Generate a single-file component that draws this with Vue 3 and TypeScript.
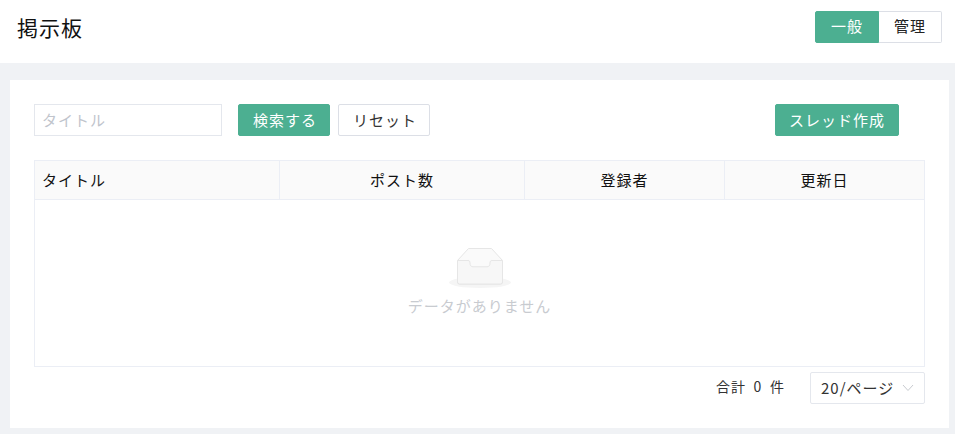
<script setup lang="ts">
const columns: { label: string; cls: string }[] = [
  { label: 'タイトル', cls: 'col-title' },
  { label: 'ポスト数', cls: 'col-posts' },
  { label: '登録者', cls: 'col-user' },
  { label: '更新日', cls: 'col-date' },
]
</script>

<template>
  <div class="page">
    <header class="top">
      <h1 class="title">掲示板</h1>
      <div class="tabs">
        <button class="tab active">一般</button>
        <button class="tab">管理</button>
      </div>
    </header>
    <main class="card">
      <div class="toolbar">
        <input class="search" type="text" placeholder="タイトル" />
        <button class="btn primary search-btn">検索する</button>
        <button class="btn reset">リセット</button>
        <button class="btn primary create">スレッド作成</button>
      </div>
      <div class="table">
        <div class="thead">
          <div v-for="c in columns" :key="c.label" class="th" :class="c.cls">{{ c.label }}</div>
        </div>
        <div class="empty">
          <svg class="empty-icon" width="64" height="41" viewBox="0 0 64 41" fill="none">
            <ellipse cx="32" cy="34.5" rx="31" ry="5.5" fill="#f5f5f5" />
            <path d="M9.5 12.5 L20.5 0.5 H43.5 L54.5 12.5 V34 a2 2 0 0 1 -2 2 H11.5 a2 2 0 0 1 -2 -2 Z" fill="#fafafa" stroke="#e6e6e6" stroke-width="1" />
            <path d="M9.5 12.5 H20 C21.5 12.5 22 13.5 22 15 C22 17.5 23 18.8 25 18.8 H39 C41 18.8 42 17.5 42 15 C42 13.5 42.5 12.5 44 12.5 H54.5 V34 a2 2 0 0 1 -2 2 H11.5 a2 2 0 0 1 -2 -2 Z" fill="#f7f7f7" stroke="#e6e6e6" stroke-width="1" />
          </svg>
          <p class="empty-text">データがありません</p>
        </div>
      </div>
      <div class="pager">
        <span class="total">合計 0 件</span>
        <div class="size">
          <span>20/ページ</span>
          <svg class="chev" width="12" height="12" viewBox="0 0 12 12" fill="none">
            <path d="M1 3 L6 8.5 L11 3" stroke="#c8cbd0" stroke-width="1" />
          </svg>
        </div>
      </div>
    </main>
  </div>
</template>

<style>
html, body { margin: 0; background: #f0f2f5; }
</style>

<style scoped>
.page {
  width: 955px;
  height: 434px;
  overflow: hidden;
  background: #f0f2f5;
  font-family: "Noto Sans CJK JP", "Liberation Sans", sans-serif;
  color: #222;
}
.top {
  height: 63px;
  background: #fff;
  display: flex;
  align-items: center;
  justify-content: space-between;
  padding: 0 13px 0 17px;
  box-sizing: border-box;
}
.title {
  margin: 0 0 9px;
  font-size: 21px;
  font-weight: 400;
  line-height: 28px;
  letter-spacing: 1px;
  color: #111;
}
.tabs {
  display: flex;
  margin-bottom: 10px;
}
.tab {
  width: 63px;
  height: 32px;
  box-sizing: border-box;
  border: 1px solid #dcdfe6;
  border-left: 0;
  background: #fff;
  font: inherit;
  font-size: 15px;
  letter-spacing: 1px;
  color: #222;
  padding: 0 0 2px;
  border-radius: 0 2px 2px 0;
}
.tab.active {
  width: 64px;
  border: 1px solid #4caf91;
  background: #4caf91;
  color: #fff;
  border-radius: 2px 0 0 2px;
}
.card {
  margin: 17px 6px 0 10px;
  height: 348px;
  box-sizing: border-box;
  background: #fff;
  padding: 24px 24px 0;
}
.toolbar {
  display: flex;
  align-items: center;
  height: 32px;
}
.search {
  width: 188px;
  height: 32px;
  box-sizing: border-box;
  border: 1px solid #e4e7ed;
  padding: 0 7px 2px;
  font: inherit;
  font-size: 15px;
  letter-spacing: 1px;
  outline: none;
  border-radius: 0;
}
.search::placeholder { color: #c0c4cc; opacity: 1; }
.btn {
  height: 32px;
  box-sizing: border-box;
  font: inherit;
  font-size: 15px;
  letter-spacing: 1px;
  padding: 0 0 2px;
  border-radius: 2px;
}
.primary {
  background: #4caf91;
  border: 1px solid #4caf91;
  color: #fff;
}
.search-btn { width: 92px; margin-left: 16px; padding-left: 2px; }
.reset {
  width: 92px;
  margin-left: 8px;
  padding-left: 2px;
  background: #fff;
  border: 1px solid #dcdfe6;
  color: #333;
}
.create { width: 124px; margin-left: 345px; }
.table {
  margin-top: 24px;
  width: 891px;
  height: 207px;
  box-sizing: border-box;
  border: 1px solid #ebeef5;
  display: flex;
  flex-direction: column;
}
.thead {
  display: flex;
  height: 39px;
  flex: none;
  background: #fafafa;
  border-bottom: 1px solid #ebeef5;
  box-sizing: border-box;
}
.th {
  display: flex;
  align-items: center;
  justify-content: center;
  font-size: 15px;
  letter-spacing: 1px;
  color: #111;
  border-right: 1px solid #ebeef5;
  box-sizing: border-box;
  padding-bottom: 2px;
}
.th:last-child { border-right: 0; }
.col-title { width: 245px; justify-content: flex-start; padding-left: 7px; }
.col-posts { width: 245px; }
.col-user { width: 200px; }
.col-date { flex: 1; }
.empty {
  flex: 1;
  display: flex;
  flex-direction: column;
  align-items: center;
  padding-top: 48px;
  box-sizing: border-box;
}
.empty-icon { display: block; }
.empty-text {
  margin: 7px 0 0;
  font-size: 15px;
  line-height: 20px;
  letter-spacing: 1px;
  color: #c8cbd0;
}
.pager {
  display: flex;
  justify-content: flex-end;
  align-items: center;
  width: 891px;
  margin-top: 5px;
  height: 32px;
}
.total {
  font-size: 14px;
  letter-spacing: 1px;
  word-spacing: 3.5px;
  color: #333;
  margin-right: 25px;
  padding-bottom: 4px;
}
.size {
  width: 115px;
  height: 32px;
  box-sizing: border-box;
  border: 1px solid #e4e7ed;
  border-radius: 2px;
  display: flex;
  align-items: center;
  justify-content: space-between;
  padding: 0 10px 2px;
  font-size: 15px;
  letter-spacing: 1px;
  color: #333;
}
.chev { margin-top: 2px; }
</style>
